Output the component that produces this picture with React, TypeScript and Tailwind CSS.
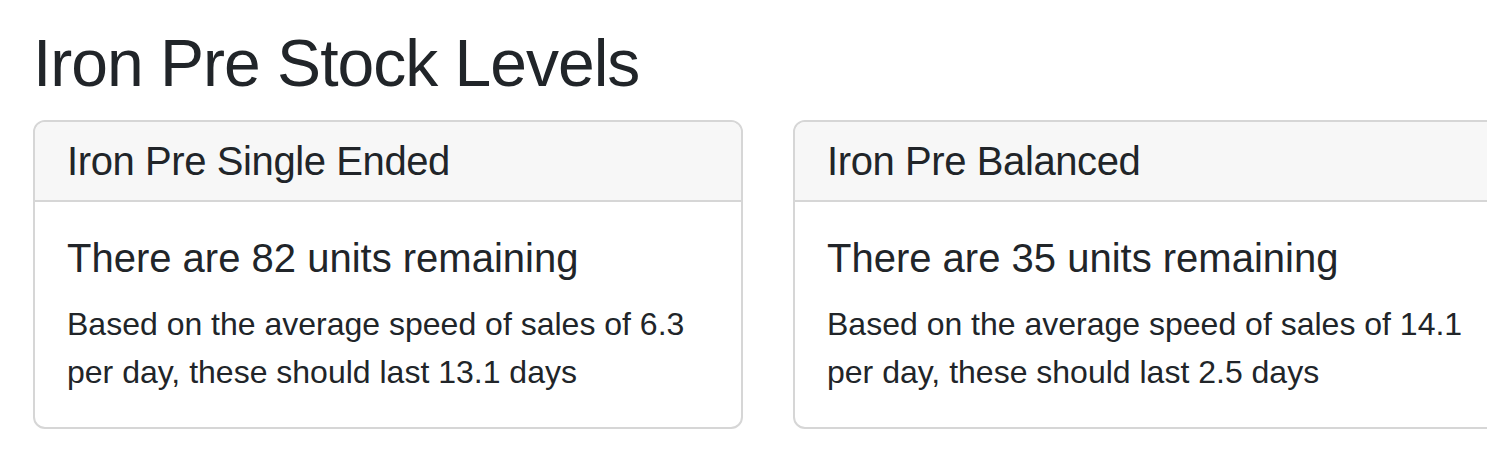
const stock = [
  { name: 'Iron Pre Single Ended', units: 82, speed: '6.3', days: '13.1' },
  { name: 'Iron Pre Balanced', units: 35, speed: '14.1', days: '2.5' },
]

function StockCard({ item }: { item: (typeof stock)[number] }) {
  return (
    <div className="w-[710px] shrink-0 overflow-hidden rounded-[12px] border-2 border-[#d6d6d6] bg-white">
      <div className="border-b-2 border-[#d6d6d6] bg-[#f7f7f7] px-8 py-4 text-[40px] leading-[46px] tracking-[-0.4px]">
        {item.name}
      </div>
      <div className="px-8 pt-8 pb-[31px]">
        <h5 className="mb-[18px] text-[40px] font-medium leading-[48px]">
          There are {item.units} units remaining
        </h5>
        <p className="text-[32px] leading-[48px]">
          Based on the average speed of sales of {item.speed} per day, these
          should last {item.days} days
        </p>
      </div>
    </div>
  )
}

export default function App() {
  return (
    <div
      className="h-[458px] w-full overflow-hidden bg-white pl-[33px] pt-6 text-[#212529]"
      style={{ fontFamily: '"Liberation Sans", Arial, sans-serif' }}
    >
      <h1 className="mb-[17px] text-[66px] leading-[1.2] tracking-[-1px]">
        Iron Pre Stock Levels
      </h1>
      <div className="flex gap-[50px]">
        {stock.map((item) => (
          <StockCard key={item.name} item={item} />
        ))}
      </div>
    </div>
  )
}
